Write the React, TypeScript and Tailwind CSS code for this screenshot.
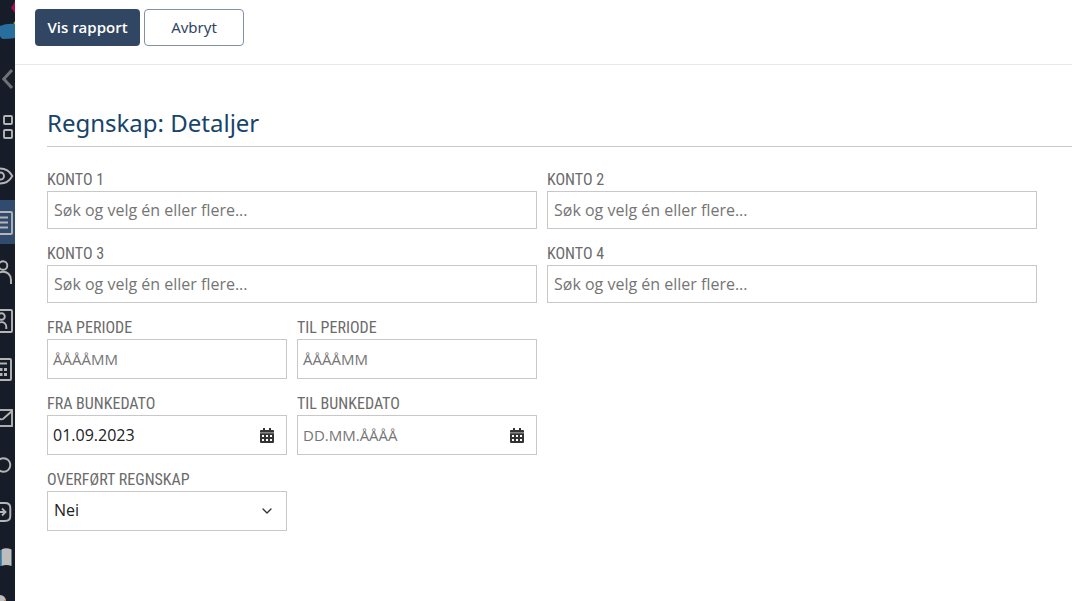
import { ReactNode } from "react";
import { ChevronDown } from "lucide-react";

const labelClass =
  "block text-[16px] leading-6 text-[#6b6b6b] uppercase whitespace-nowrap pt-px -mb-px font-['Roboto_Condensed','Open_Sans',sans-serif]";
const boxClass =
  "block w-full border border-[#c8c8c8] bg-white text-[16px] text-[#212121] placeholder:text-[#757575] placeholder:opacity-100 outline-none focus:border-[#314663]";

const navItems: { name: string; active?: boolean; icon: ReactNode }[] = [
  { name: "Tilbake", icon: <path d="M12 14 3.800 23l8.200 9" stroke="#6f7175" strokeWidth="3" /> },
  {
    name: "Oversikt",
    icon: (
      <>
        <rect x="4" y="12" width="8" height="8" rx="1" />
        <rect x="4" y="26" width="8" height="8" rx="1" />
      </>
    ),
  },
  {
    name: "Innsyn",
    icon: (
      <>
        <path d="M-12 24C-7 14 7 14 12.300 24 7 34-7 34-12 24Z" />
        <circle cx="0.500" cy="24" r="3.500" />
      </>
    ),
  },
  {
    name: "Rapporter",
    active: true,
    icon: (
      <>
        <rect x="-11" y="12" width="23" height="22" rx="1" />
        <path d="M-6 17.500H8M-6 22.500H8M-6 27.500H8" />
      </>
    ),
  },
  {
    name: "Personer",
    icon: (
      <>
        <circle cx="3" cy="17.500" r="4.300" />
        <path d="M-5 36V32C-5 21 11 21 11 32V36" />
      </>
    ),
  },
  {
    name: "Kontakter",
    icon: (
      <>
        <rect x="-11" y="14" width="23" height="22" rx="1" />
        <circle cx="1.500" cy="20.500" r="3.300" />
        <path d="M-3 33V31C-3 24.500 6.300 24.500 6.300 31V33" />
      </>
    ),
  },
  {
    name: "Kalkulator",
    icon: (
      <>
        <rect x="-8" y="15" width="19" height="21" rx="1" />
        <path d="M-4 19.500H7" />
        <path d="M0 25.500H2.500M4 25.500H7M0 30.500H2.500M4 30.500H7" strokeWidth="3" />
      </>
    ),
  },
  {
    name: "Meldinger",
    icon: (
      <>
        <rect x="-12" y="18" width="24" height="16" />
        <path d="M12 19 3 27Q1 28-2 26L-12 19" />
      </>
    ),
  },
  { name: "Søk", icon: <circle cx="3.500" cy="25" r="6.800" /> },
  {
    name: "Logg ut",
    icon: (
      <>
        <path d="M-4 15H5Q10.300 15 10.300 20V28Q10.300 33 5 33H-4" />
        <path d="M-4 24H5M2 20.500 5.500 24 2 27.500" />
      </>
    ),
  },
  {
    name: "Håndbok",
    icon: (
      <>
        <path d="M0 14V30" stroke="#2679b2" strokeWidth="3" />
        <path d="M1.500 13.500Q6 11 11.500 13.500V30Q6 28 1.500 30Z" fill="#bdbdbd" stroke="none" />
      </>
    ),
  },
  {
    name: "Bruker",
    icon: (
      <>
        <circle cx="0" cy="17" r="6" fill="#bdbdbd" stroke="none" />
        <circle cx="5" cy="17" r="1" fill="#c9814a" stroke="none" />
      </>
    ),
  },
];

function Logo() {
  return (
    <svg viewBox="0 0 15 56" className="h-14 w-full shrink-0" aria-hidden="true">
      <path d="M15 1 11 8l4 5z" fill="#a60f4f" />
      <circle cx="15" cy="23" r="1.500" fill="#a5a61c" />
      <path d="M0 26Q7 23 15 24V38Q9 39 3 39Q1 39 0 36Z" fill="#286e9e" />
    </svg>
  );
}

function CalendarIcon() {
  return (
    <svg viewBox="0 0 14 15" width="14" height="15" aria-hidden="true">
      <path d="M3 0h2v2h4V0h2v2h2a1 1 0 0 1 1 1v11a1 1 0 0 1-1 1H1a1 1 0 0 1-1-1V3a1 1 0 0 1 1-1h2z" fill="#333" />
      <path d="M0 4h14v1.500H0z" fill="#858585" />
      <path d="M2 7h2v2H2zM6 7h2v2H6zM10 7h2v2h-2zM2 11h2v2H2zM6 11h2v2H6zM10 11h2v2h-2z" fill="#fff" />
    </svg>
  );
}

function Sidebar() {
  return (
    <nav className="flex h-screen w-[15px] shrink-0 flex-col overflow-hidden bg-[#171c29]" aria-label="Hovedmeny">
      <Logo />
      <div className="flex flex-col gap-1">
        {navItems.map((item) => (
          <a
            key={item.name}
            href="#"
            aria-label={item.name}
            className={item.active ? "block h-11 bg-[#314b6e]" : "block h-11"}
          >
            <svg viewBox="0 0 15 44" className="h-11 w-full" fill="none" stroke="#b5b5b5" strokeWidth="1.900">
              {item.icon}
            </svg>
          </a>
        ))}
      </div>
    </nav>
  );
}

function SearchField({ id, label }: { id: string; label: string }) {
  return (
    <div className="col-span-2">
      <label htmlFor={id} className={labelClass}>{label}</label>
      <input id={id} type="text" placeholder="Søk og velg én eller flere..." className={`${boxClass} h-[38px] px-1.5`} />
    </div>
  );
}

function PeriodField({ id, label }: { id: string; label: string }) {
  return (
    <div>
      <label htmlFor={id} className={labelClass}>{label}</label>
      <input id={id} type="text" placeholder="ÅÅÅÅMM" className={`${boxClass} h-10 px-[5px] placeholder:text-[15px]`} />
    </div>
  );
}

function DateField({ id, label, value }: { id: string; label: string; value?: string }) {
  return (
    <div>
      <label htmlFor={id} className={labelClass}>{label}</label>
      <div className="flex h-10 items-center border border-[#c8c8c8] bg-white pr-3">
        <input
          id={id}
          type="text"
          defaultValue={value}
          placeholder="DD.MM.ÅÅÅÅ"
          className="h-full w-full min-w-0 px-[5px] text-[16px] text-[#212121] outline-none placeholder:text-[15px] placeholder:text-[#757575]"
        />
        <button type="button" aria-label={`Velg ${label.toLowerCase()}`} className="shrink-0">
          <CalendarIcon />
        </button>
      </div>
    </div>
  );
}

export default function App() {
  return (
    <div className="flex h-screen bg-white font-['Open_Sans',sans-serif]">
      <Sidebar />
      <main className="min-w-0 flex-1 overflow-y-auto">
        <div className="flex gap-1 border-b border-[#e8e8e8] pt-[9px] pb-[18px] pl-5">
          <button type="button" className="h-[37px] w-[105px] rounded bg-[#314663] text-[15px] font-semibold text-white">
            Vis rapport
          </button>
          <button
            type="button"
            className="h-[37px] w-[100px] rounded border border-[#8390a5] bg-white font-['Noto_Sans',sans-serif] text-[15px] text-[#314663]"
          >
            Avbryt
          </button>
        </div>
        <div className="pt-10 pb-8 pl-8">
          <h1 className="border-b border-[#c8c8c8] pb-[5px] font-['Noto_Sans',sans-serif] text-2xl leading-9 text-[#17446b]">
            Regnskap: Detaljer
          </h1>
          <form className="mt-5 mr-[35px] grid grid-cols-4 gap-x-2.5 gap-y-3">
            <SearchField id="konto1" label="Konto 1" />
            <SearchField id="konto2" label="Konto 2" />
            <SearchField id="konto3" label="Konto 3" />
            <SearchField id="konto4" label="Konto 4" />
            <PeriodField id="fraPeriode" label="Fra periode" />
            <PeriodField id="tilPeriode" label="Til periode" />
            <div className="col-start-1">
              <DateField id="fraBunkedato" label="Fra bunkedato" value="01.09.2023" />
            </div>
            <DateField id="tilBunkedato" label="Til bunkedato" />
            <div className="col-start-1">
              <label htmlFor="overfort" className={labelClass}>Overført regnskap</label>
              <div className="grid items-center">
                <select id="overfort" className={`${boxClass} col-start-1 row-start-1 h-10 appearance-none px-1.5 pb-0.5`}>
                  <option>Nei</option>
                  <option>Ja</option>
                </select>
                <ChevronDown size={16} className="pointer-events-none col-start-1 row-start-1 mr-3 justify-self-end text-[#333]" />
              </div>
            </div>
          </form>
        </div>
      </main>
    </div>
  );
}
